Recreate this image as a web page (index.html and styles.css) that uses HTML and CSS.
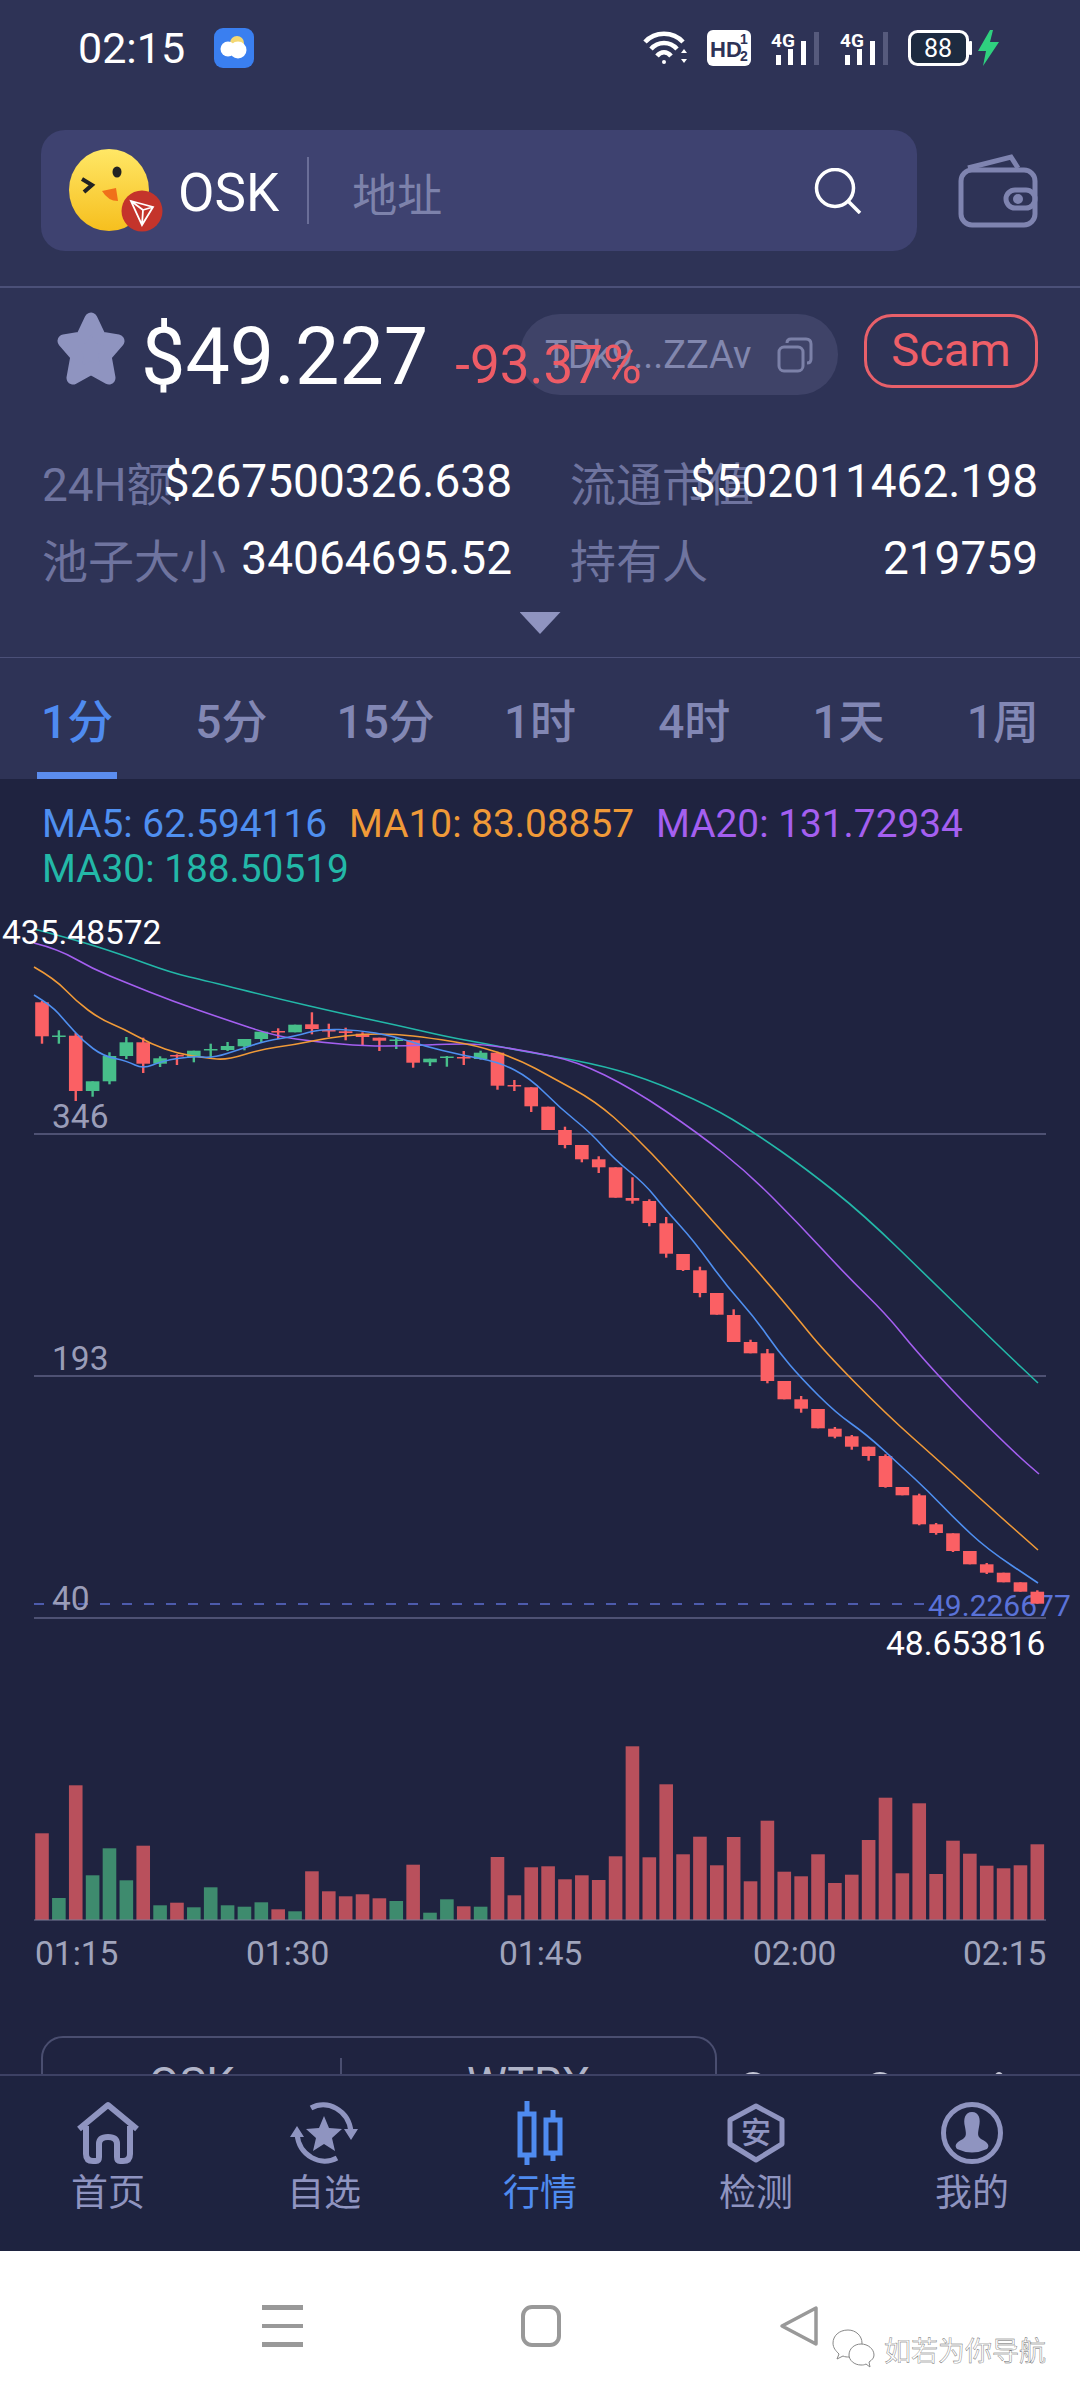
FILE: index.html
```html
<!DOCTYPE html>
<html lang="zh">
<head>
  <meta charset="UTF-8">
  <meta name="viewport" content="width=device-width, initial-scale=1.0">
  <title>OSK 行情</title>
  <link rel="stylesheet" href="styles.css">
</head>
<body>
  <div class="page">
    <div class="content">
      <div class="statusbar">
        <span class="clock">02:15</span>
        <svg class="notify" viewBox="0 0 40 40" width="40" height="40">
          <rect width="40" height="40" rx="9" fill="#3a7ff0"/>
          <circle cx="23" cy="15" r="7" fill="#f4d873"/>
          <circle cx="14" cy="21" r="7.5" fill="#fff"/>
          <circle cx="24" cy="22" r="8.5" fill="#fff"/>
        </svg>
        <div class="status-icons">
          <svg viewBox="0 0 45 36" width="45" height="36" fill="none" stroke="#fff" stroke-width="4.5">
            <path d="M2 12C12 1 30 1 40 12"/>
            <path d="M8 19C15 11 27 11 34 19"/>
            <path d="M14 26C18 21 24 21 28 26"/>
            <circle cx="21" cy="32" r="2" fill="#fff" stroke="none"/>
            <path d="M41 19l-3 4h6zM41 33l-3-4h6z" fill="#fff" stroke="none"/>
          </svg>
          <svg viewBox="0 0 44 36" width="44" height="36">
            <rect width="44" height="36" rx="6" fill="#fff"/>
            <text class="hd" x="3" y="27">HD</text>
            <text class="hd-small" x="33" y="14">1</text>
            <text class="hd-small" x="33" y="31">2</text>
          </svg>
          <svg viewBox="0 0 50 36" width="50" height="36" fill="#fff">
            <text class="net" x="1" y="17">4G</text>
            <rect x="6" y="25" width="5" height="10"/>
            <rect x="18" y="19" width="5" height="16"/>
            <rect x="31" y="11" width="5" height="24"/>
            <rect x="44" y="2" width="5" height="33" fill="#565a7c"/>
          </svg>
          <svg viewBox="0 0 50 36" width="50" height="36" fill="#fff">
            <text class="net" x="1" y="17">4G</text>
            <rect x="6" y="25" width="5" height="10"/>
            <rect x="18" y="19" width="5" height="16"/>
            <rect x="31" y="11" width="5" height="24"/>
            <rect x="44" y="2" width="5" height="33" fill="#565a7c"/>
          </svg>
          <svg viewBox="0 0 93 36" width="93" height="36">
            <rect x="1.5" y="1.5" width="58" height="33" rx="8" fill="#1d2b40" stroke="#fff" stroke-width="3"/>
            <rect x="61" y="11" width="3" height="14" rx="1" fill="#fff"/>
            <text class="batt" x="30" y="27">88</text>
            <path d="M82 0L70 21h8l-3 15 16-24h-9l3-12z" fill="#2fd07f"/>
          </svg>
        </div>
      </div>

      <div class="search-row">
        <div class="search-bar">
          <svg class="avatar" viewBox="0 0 95 84" width="95" height="84">
            <defs>
              <linearGradient id="duck" x1="0" y1="0" x2="0" y2="1">
                <stop offset="0" stop-color="#ffe766"/>
                <stop offset="1" stop-color="#f6bf1e"/>
              </linearGradient>
            </defs>
            <ellipse cx="41" cy="41" rx="40" ry="41" fill="url(#duck)"/>
            <ellipse cx="49" cy="23" rx="4.5" ry="5.5" fill="#222"/>
            <path d="M14 30L24 36L16 43" fill="none" stroke="#222" stroke-width="4"/>
            <path d="M34 42L48 39L50 52Q40 52 34 42z" fill="#f0701a"/>
            <circle cx="74" cy="62" r="20.5" fill="#c4342b"/>
            <path d="M63 52L85 58L74 76zM63 52L75 61L74 76M75 61L85 58" fill="none" stroke="#fff" stroke-width="1.8"/>
          </svg>
          <span class="symbol">OSK</span>
          <span class="bar-divider"></span>
          <span class="address">地址</span>
          <svg class="search-icon" viewBox="0 0 48 46" width="48" height="46" fill="none" stroke="#fff" stroke-width="3.5">
            <circle cx="21" cy="20" r="18.5"/>
            <path d="M34 33L46 45"/>
          </svg>
        </div>
        <svg class="wallet" viewBox="0 0 80 74" width="80" height="74" fill="none" stroke="#7f84b0" stroke-width="5">
          <rect x="3" y="16" width="74" height="55" rx="11"/>
          <path d="M10 14L53 3L60 14"/>
          <rect x="48" y="36" width="29" height="18" rx="9"/>
          <circle cx="60" cy="45" r="2.5" fill="#7f84b0"/>
        </svg>
      </div>

      <div class="summary">
        <div class="price-row">
          <div class="address-pill">
            <span>TDk9...ZZAv</span>
            <svg viewBox="0 0 36 36" width="36" height="36" fill="none" stroke="#7c81a8" stroke-width="3">
              <rect x="2" y="10" width="24" height="24" rx="5"/>
              <path d="M10 6Q10 2 14 2H29Q34 2 34 7V22Q34 26 30 26"/>
            </svg>
          </div>
          <svg class="fav" viewBox="0 0 74 76" width="74" height="76">
            <polygon points="37,7 46,26 64,29 51,44 55,66 37,56 19,66 23,44 10,29 28,26" fill="#8f94c0" stroke="#8f94c0" stroke-width="13" stroke-linejoin="round"/>
          </svg>
          <span class="price">$49.227</span>
          <span class="change">-93.37%</span>
          <span class="scam">Scam</span>
        </div>
        <div class="stats">
          <div class="stat"><span class="stat-name">24H额</span><span class="stat-value">$267500326.638</span></div>
          <div class="stat"><span class="stat-name">流通市值</span><span class="stat-value">$502011462.198</span></div>
          <div class="stat"><span class="stat-name">池子大小</span><span class="stat-value">34064695.52</span></div>
          <div class="stat"><span class="stat-name">持有人</span><span class="stat-value">219759</span></div>
        </div>
        <div class="expand"></div>
      </div>

      <div class="tabs">
        <div class="tab active">1分</div>
        <div class="tab">5分</div>
        <div class="tab">15分</div>
        <div class="tab">1时</div>
        <div class="tab">4时</div>
        <div class="tab">1天</div>
        <div class="tab">1周</div>
      </div>

      <div class="chart">
        <div class="legend">
          <span class="ma5">MA5: 62.594116</span>
          <span class="ma10">MA10: 83.08857</span>
          <span class="ma20">MA20: 131.72934</span>
          <span class="ma30">MA30: 188.50519</span>
        </div>
        <svg class="plot" viewBox="0 890 1080 1085" width="1080" height="1085">
          <line class="grid" x1="34" y1="1133" x2="1046" y2="1133"/>
          <line class="grid" x1="34" y1="1375" x2="1046" y2="1375"/>
          <line class="grid" x1="34" y1="1617" x2="1046" y2="1617"/>
          <line class="last-line" x1="34" y1="1603" x2="925" y2="1603"/>
          <text class="axis" x="52" y="1127">346</text>
          <text class="axis" x="52" y="1369">193</text>
          <text class="axis" x="52" y="1609">40</text>
          <text class="last-price" x="928" y="1615">49.226677</text>
          <g id="candles"></g>
          <g id="lines"></g>
          <text class="extreme" x="2" y="943">435.48572</text>
          <text class="extreme" x="886" y="1654">48.653816</text>
          <g id="volume"></g>
          <line class="vol-base" x1="34" y1="1919" x2="1046" y2="1919"/>
          <text class="time" x="35" y="1964">01:15</text>
          <text class="time" x="246" y="1964">01:30</text>
          <text class="time" x="499" y="1964">01:45</text>
          <text class="time" x="753" y="1964">02:00</text>
          <text class="time" x="963" y="1964">02:15</text>
        </svg>
      </div>

      <div class="swap-row">
        <div class="swap">
          <div class="swap-side">OSK</div>
          <div class="swap-side wide">WTRX</div>
        </div>
        <span class="peek"></span>
        <span class="peek"></span>
        <span class="peek small"></span>
      </div>
    </div>

    <nav class="nav">
      <div class="nav-item">
        <svg viewBox="0 -1 64 64" width="64" height="64" fill="none" stroke="currentColor" stroke-width="6" stroke-linejoin="round">
          <path d="M3 27L32 3L61 27"/>
          <path d="M10 24V52Q10 59 17 59H20Q23 59 23 55V42Q23 35 32 35Q41 35 41 42V55Q41 59 44 59H47Q54 59 54 52V24"/>
        </svg>
        <span>首页</span>
      </div>
      <div class="nav-item">
        <svg viewBox="0 -1 70 64" width="70" height="64" fill="none" stroke="currentColor" stroke-width="5">
          <path d="M22 6C38-3 60 8 62 30"/>
          <path d="M48 56C32 65 10 54 8 32"/>
          <path d="M55 27h14l-7 11zM1 35h14l-7-11z" fill="currentColor" stroke="none"/>
          <polygon points="35,14 40,26 53,27 43,36 46,49 35,42 24,49 27,36 17,27 30,26" fill="currentColor" stroke="none"/>
        </svg>
        <span>自选</span>
      </div>
      <div class="nav-item active">
        <svg viewBox="0 0 46 64" width="46" height="64" fill="none" stroke="currentColor" stroke-width="5">
          <rect x="3" y="13" width="14" height="41"/>
          <path d="M10 0V13M10 54V64"/>
          <rect x="29" y="19" width="14" height="33"/>
          <path d="M36 9V19M36 52V60"/>
        </svg>
        <span>行情</span>
      </div>
      <div class="nav-item">
        <svg viewBox="0 -2 58 64" width="58" height="64" fill="none" stroke="currentColor" stroke-width="5" stroke-linejoin="round">
          <path d="M29 3L55 17V41L29 57L3 41V17z"/>
          <text class="shield" x="29" y="40">安</text>
        </svg>
        <span>检测</span>
      </div>
      <div class="nav-item">
        <svg viewBox="0 -1 62 64" width="62" height="64" fill="none" stroke="currentColor" stroke-width="5">
          <circle cx="31" cy="31" r="28.5"/>
          <path d="M31 10C38 10 40 17 38 25C37 31 36 34 40 37C47 40 49 44 46 47Q31 54 16 47C13 44 15 40 22 37C26 34 25 31 24 25C22 17 24 10 31 10z" fill="currentColor" stroke="none"/>
        </svg>
        <span>我的</span>
      </div>
    </nav>

    <div class="sysbar">
      <div class="sys-menu"><i></i><i></i><i></i></div>
      <div class="sys-home"></div>
      <svg class="sys-back" viewBox="0 0 40 42" width="40" height="42">
        <path d="M37 3V39L3 21z" fill="none" stroke="#999" stroke-width="3.5" stroke-linejoin="round"/>
      </svg>
      <div class="watermark">
        <svg viewBox="0 0 44 40" width="44" height="40" fill="#fff" stroke="#888" stroke-width="1">
          <path d="M16 1C7 1 1 7 1 14C1 19 4 22 7 25L5 30L11 27C13 28 15 28 17 28C25 28 30 21 30 14C30 7 24 1 16 1z"/>
          <path d="M29 15C22 15 17 20 17 26C17 31 22 36 29 36C31 36 32 36 34 35L38 38L37 33C40 31 42 29 42 26C42 20 36 15 29 15z"/>
        </svg>
        <span>如若为你导航</span>
      </div>
    </div>
  </div>
  <script src="chart.js"></script>
</body>
</html>
```

FILE: styles.css
```css
* {
  box-sizing: border-box;
}

body {
  margin: 0;
  font-family: Roboto, "Noto Sans CJK SC", sans-serif;
  background: #fff;
}

.page {
  width: 1080px;
  height: 2400px;
  display: flex;
  flex-direction: column;
  overflow: hidden;
}

.content {
  height: 2074px;
  flex: none;
  overflow: hidden;
  background: #2e3356;
}

/* status bar */
.statusbar {
  height: 95px;
  display: flex;
  align-items: center;
  padding: 0 79px 0 78px;
}

.clock {
  font-size: 43px;
  color: #fff;
  width: 136px;
}

.status-icons {
  margin-left: auto;
  display: flex;
  align-items: center;
  gap: 19px;
}

.hd {
  font: 700 22px "Liberation Sans", sans-serif;
  fill: #2e3356;
}

.hd-small {
  font: 700 14px "Liberation Sans", sans-serif;
  fill: #2e3356;
}

.net {
  font: 700 19px Roboto, sans-serif;
}

.batt {
  font: 400 25px Roboto, sans-serif;
  fill: #fff;
  text-anchor: middle;
}

/* search */
.search-row {
  height: 193px;
  padding: 35px 42px 35px 41px;
  display: flex;
  align-items: center;
  justify-content: space-between;
  border-bottom: 2px solid #4b5078;
}

.search-bar {
  width: 876px;
  height: 121px;
  border-radius: 24px;
  background: #3e4270;
  display: flex;
  align-items: center;
  padding: 0 55px 0 27px;
}

.avatar {
  flex: none;
}

.symbol {
  font-size: 53px;
  color: #fff;
  margin: 4px 0 0 15px;
}

.bar-divider {
  width: 2px;
  height: 67px;
  background: #6a6e98;
  margin-left: 28px;
}

.address {
  font-size: 45px;
  color: #7d82ab;
  margin: 3px 0 0 43px;
}

.search-icon {
  margin-left: auto;
}

/* price and stats */
.summary {
  height: 369px;
  padding-top: 26px;
}

.price-row {
  position: relative;
  height: 81px;
  display: flex;
  align-items: center;
  padding: 0 42px 0 54px;
}

.address-pill {
  position: absolute;
  left: 520px;
  top: 0;
  width: 318px;
  height: 81px;
  border-radius: 40px;
  background: #3f4368;
  display: flex;
  align-items: center;
  gap: 26px;
  padding-left: 25px;
  font-size: 38px;
  color: #8287ae;
}

.fav {
  position: relative;
  flex: none;
  margin-top: -9px;
}

.price {
  position: relative;
  font-size: 79px;
  color: #fff;
  margin: 4px 0 0 13px;
}

.change {
  position: relative;
  font-size: 53px;
  color: #ee5c66;
  margin: 20px 0 0 27px;
}

.scam {
  position: relative;
  margin: -7px 0 0 auto;
  width: 174px;
  height: 74px;
  border: 3px solid #e8606a;
  border-radius: 28px;
  font-size: 47px;
  line-height: 66px;
  text-align: center;
  color: #ee5f68;
}

.stats {
  margin-top: 47px;
  display: grid;
  grid-template-columns: 470px 468px;
  column-gap: 58px;
  padding-left: 42px;
}

.stat {
  height: 77px;
  display: grid;
  align-items: center;
}

.stat > span {
  grid-area: 1 / 1;
  white-space: nowrap;
}

.stat-name {
  justify-self: start;
  font-size: 46px;
  color: #6f749f;
}

.stat-value {
  justify-self: end;
  font-size: 46px;
  color: #fff;
}

.expand {
  width: 41px;
  height: 22px;
  margin: 16px auto 0;
  background: #8f94c0;
  clip-path: polygon(0 0, 100% 0, 50% 100%);
}

/* period tabs */
.tabs {
  height: 122px;
  display: flex;
  border-top: 1px solid #4b5078;
}

.tab {
  flex: 1;
  position: relative;
  padding-top: 34px;
  line-height: 60px;
  text-align: center;
  font-size: 46px;
  font-weight: 500;
  color: #8287b4;
}

.tab.active {
  color: #4f8bf0;
}

.tab.active::after {
  content: "";
  position: absolute;
  left: 37px;
  bottom: 0;
  width: 80px;
  height: 7px;
  background: #5b8def;
}

/* chart */
.chart {
  background: #1f2340;
}

.legend {
  height: 112px;
  padding: 22px 20px 0 42px;
  display: flex;
  flex-wrap: wrap;
  column-gap: 22px;
  font-size: 38.8px;
  line-height: 45px;
}

.ma5 { color: #4f8ff0; }
.ma10 { color: #f09a38; }
.ma20 { color: #a45ff0; }
.ma30 { color: #23b8a8; }

.plot {
  display: block;
}

.plot text {
  font-family: Roboto, sans-serif;
  font-size: 33.5px;
}

.grid {
  stroke: #5f6284;
  stroke-width: 1.5;
}

.last-line {
  stroke: #5d6fd0;
  stroke-width: 1.5;
  stroke-dasharray: 10 12;
}

.vol-base {
  stroke: #7a7d98;
  stroke-width: 1;
}

.plot .axis {
  fill: #9a9db8;
}

.plot .last-price {
  fill: #5a72d8;
  font-size: 30px;
}

.plot .extreme {
  fill: #fff;
}

.plot .time {
  fill: #a0a4bc;
}

.up {
  fill: #47bf8a;
}

.down {
  fill: #fb6064;
}

.vol-up {
  fill: #3e8b6e;
}

.vol-down {
  fill: #b9505c;
}

.ma-line {
  fill: none;
  stroke-width: 1.6;
}

/* swap box, cut off by the nav */
.swap-row {
  display: flex;
  padding: 60px 0 0 41px;
  background: #1f2340;
  height: 160px;
}

.swap {
  width: 676px;
  height: 100px;
  border: 2px solid #4a4e70;
  border-radius: 22px 22px 0 0;
  display: flex;
  padding-top: 20px;
  font-size: 45px;
  line-height: 52px;
  color: #b0b4c8;
  text-align: center;
}

.swap-side {
  width: 297px;
}

.swap-side.wide {
  flex: 1;
  border-left: 2px solid #4a4e70;
}

.peek {
  width: 30px;
  height: 30px;
  border-radius: 50%;
  background: #c6c8d6;
  margin: 36px 0 0 21px;
}

.peek + .peek {
  margin-left: 97px;
}

.peek.small {
  width: 14px;
}

/* bottom nav */
.nav {
  height: 177px;
  flex: none;
  display: flex;
  background: #1e2340;
  border-top: 2px solid #3d4164;
}

.nav-item {
  flex: 1;
  display: flex;
  flex-direction: column;
  align-items: center;
  padding-top: 25px;
  color: #8f94c0;
}

.nav-item.active {
  color: #4f8bf0;
}

.nav-item span {
  margin-top: 7px;
  font-size: 37px;
  line-height: 44px;
}

.shield {
  font: 500 30px "Noto Sans CJK SC", sans-serif;
  fill: currentColor;
  stroke: none;
  text-anchor: middle;
}

/* android bar */
.sysbar {
  position: relative;
  flex: 1;
  background: #fff;
  display: flex;
  align-items: flex-start;
  padding: 54px 0 0 262px;
}

.sys-menu {
  width: 41px;
  display: flex;
  flex-direction: column;
  gap: 14px;
}

.sys-menu i {
  height: 4.5px;
  background: #999;
}

.sys-home {
  width: 40px;
  height: 42px;
  margin-left: 218px;
  border: 4px solid #999;
  border-radius: 11px;
}

.sys-back {
  margin-left: 218px;
}

.watermark {
  position: absolute;
  left: 832px;
  top: 78px;
  display: flex;
  align-items: center;
  gap: 8px;
  font-size: 27px;
  color: #fff;
  -webkit-text-stroke: 0.4px #666;
}
```

FILE: chart.js
```js
var NS = 'http://www.w3.org/2000/svg';

function add(parent, name, attrs) {
  var el = document.createElementNS(NS, name);
  for (var k in attrs) el.setAttribute(k, attrs[k]);
  parent.appendChild(el);
  return el;
}

// body top, body bottom, wick top, wick bottom
var candles = [
  [1001.3,1035.3,1000,1042.7],[1034.5,1036,1029.3,1042.7],[1034.7,1090,1032,1100],[1080.3,1090,1080.3,1095.7],
  [1055,1080.3,1051.3,1083.3],[1041.3,1055,1036,1058],[1041.3,1062.7,1036.7,1072],[1057.3,1062.7,1055.3,1066],
  [1054,1055.5,1053.3,1064],[1049.7,1056,1049.7,1061.3],[1048,1049.5,1042.7,1056.7],[1045,1049,1041,1050],
  [1038,1045.3,1038,1049.3],[1030.7,1038,1030.7,1042],[1030,1031.5,1027.3,1038],[1023.7,1031.3,1023.7,1031.3],
  [1023.3,1028,1011.3,1033.3],[1029,1030.5,1022.7,1036],[1030.3,1032,1026.7,1039.3],[1032.7,1036,1031.3,1044],
  [1036.7,1039.7,1036.7,1050],[1038.5,1040,1036.7,1048],[1039.3,1061.7,1039.3,1066.7],[1057.7,1061.3,1057.7,1065],
  [1055.5,1057,1055,1065.7],[1056,1057.5,1050,1064],[1051.7,1058,1049.7,1058.7],[1051.7,1084.7,1050.7,1088.7],
  [1084,1085.5,1079,1090],[1086.3,1105.3,1086.3,1111],[1105.7,1129,1105.7,1129],[1129,1144,1125.7,1147.3],
  [1144,1158.3,1144,1161.3],[1158.3,1166.3,1155.3,1172],[1166.3,1196.7,1166.3,1196.7],[1197,1199.7,1176.3,1202.7],
  [1200,1222,1198.3,1225.3],[1222.3,1252.7,1216,1256.7],[1253,1269,1253,1270],[1269.3,1292,1265.7,1296.3],
  [1292,1313.7,1292,1313.7],[1314,1341,1308.3,1341],[1341,1352.3,1338.7,1352.3],[1352.3,1380,1348,1382.3],
  [1380,1398.3,1380,1398.3],[1398.3,1407.7,1395,1411.7],[1408,1427.3,1408,1427.3],[1427.7,1435.7,1426,1437.3],
  [1435.3,1445.7,1434,1448.7],[1445.7,1455,1445.7,1459.7],[1455,1486,1453.3,1486.7],[1486,1494.3,1486,1494.3],
  [1494.3,1523.3,1492.7,1524.3],[1523.3,1532,1522,1533.7],[1532.3,1550,1532.3,1551],[1550,1563.3,1550,1563.3],
  [1563.3,1571.7,1562,1573],[1571.7,1581.3,1571.7,1581.3],[1581.3,1590.7,1581.3,1590.7],[1590.7,1602.7,1589.3,1602.7]
];

var volumes = [
  86.7,22,134.7,44.7,71.7,39.7,74.3,14.7,17.3,12.7,32.7,14.7,13.3,17.7,10.7,8.7,48.7,28.7,23.7,25.7,
  21.7,19,55.3,7.3,20.7,13.7,13.3,63,24.7,52.7,53.7,40.7,44.7,40,63.7,173.7,62.7,135.7,65.7,83.3,
  54.7,83,38.7,99.3,48.3,43.7,65.7,37,45.3,80,122.3,46.7,116.7,46,79.3,66.3,54.3,51.7,54.7,75.7
];

var green = [1,3,4,5,7,9,10,11,12,13,15,21,23,24,26];

var maLines = {
  '#23b8a8': [[34,928],[76,939],[120,953],[172,972],[207,980],[275,997],[344,1013],[396,1024],[448,1036],[482,1042],[522,1050],[591,1062],[645,1077],[710,1105],[755,1132],[805,1167],[863,1213],[935,1283],[1004,1350],[1038,1382]],
  '#a45ff0': [[34,942],[58,948],[93,968],[127,982],[172,1000],[224,1018],[275,1035],[317,1041],[365,1045],[406,1045],[448,1043],[482,1043],[526,1050],[576,1060],[633,1088],[698,1132],[748,1172],[798,1222],[847,1275],[886,1313],[916,1350],[962,1400],[1016,1453],[1039,1473]],
  '#f09a38': [[34,966],[55,978],[76,1000],[100,1018],[124,1028],[151,1043],[179,1053],[207,1057],[227,1059],[262,1048],[293,1044],[327,1037],[362,1033],[396,1033],[430,1037],[475,1044],[518,1058],[553,1077],[595,1100],[633,1133],[671,1173],[717,1225],[755,1267],[794,1313],[824,1350],[886,1413],[939,1460],[985,1502],[1038,1549]],
  '#4f8ff0': [[34,994],[52,1005],[65,1020],[83,1040],[103,1055],[127,1060],[143,1068],[162,1060],[193,1055],[213,1057],[241,1048],[265,1040],[296,1035],[320,1028],[358,1029],[393,1035],[424,1045],[461,1054],[499,1061],[530,1077],[560,1107],[591,1132],[614,1158],[645,1183],[664,1207],[694,1240],[725,1283],[755,1317],[778,1350],[801,1377],[836,1412],[866,1433],[901,1465],[928,1490],[955,1518],[987,1548],[1038,1582]]
};

var candleLayer = document.getElementById('candles');
var volumeLayer = document.getElementById('volume');
var lineLayer = document.getElementById('lines');

candles.forEach(function (c, i) {
  var x = 42 + 16.87 * i;
  var up = green.indexOf(i) >= 0;
  var cls = up ? 'up' : 'down';
  add(candleLayer, 'rect', { x: x - 1.2, y: c[2], width: 2.4, height: c[3] - c[2], 'class': cls });
  add(candleLayer, 'rect', { x: x - 6.8, y: c[0], width: 13.6, height: c[1] - c[0], 'class': cls });
  add(volumeLayer, 'rect', { x: x - 6.8, y: 1919 - volumes[i], width: 13.6, height: volumes[i], 'class': up ? 'vol-up' : 'vol-down' });
});

// smooth the points through their midpoints
for (var color in maLines) {
  var pts = maLines[color];
  var d = 'M' + pts[0].join(' ');
  for (var i = 1; i < pts.length - 1; i++) {
    var mx = (pts[i][0] + pts[i + 1][0]) / 2;
    var my = (pts[i][1] + pts[i + 1][1]) / 2;
    d += 'Q' + pts[i].join(' ') + ' ' + mx + ' ' + my;
  }
  d += 'L' + pts[pts.length - 1].join(' ');
  add(lineLayer, 'path', { d: d, stroke: color, 'class': 'ma-line' });
}
```
